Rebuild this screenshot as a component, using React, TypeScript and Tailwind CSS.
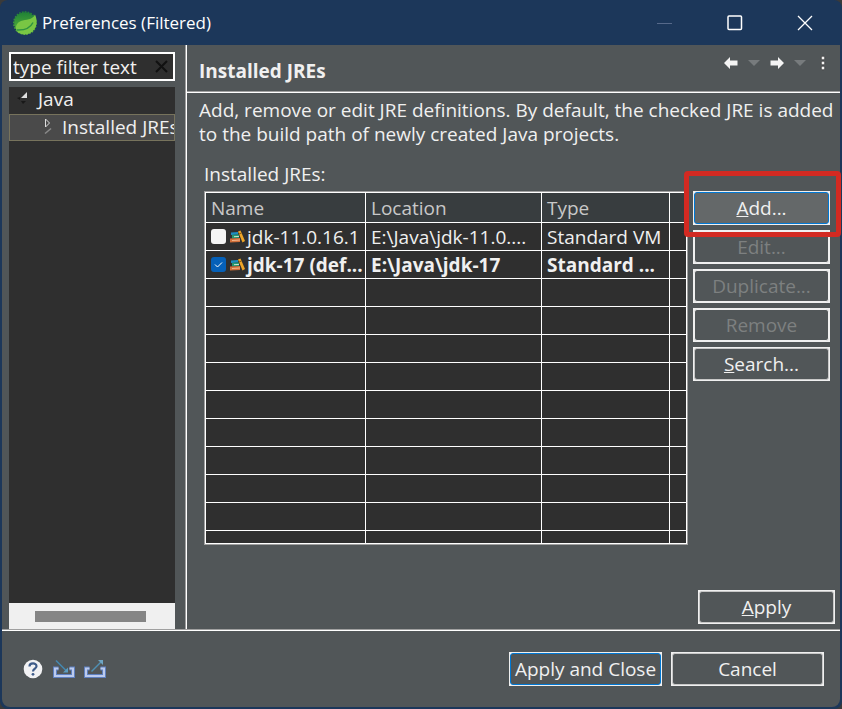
import type { ReactNode } from "react";

const emptyRows = Array.from({ length: 9 }, (_, i) => i);

const jres = [
  { name: "jdk-11.0.16.1", location: "E:\\Java\\jdk-11.0....", type: "Standard VM", isDefault: false },
  { name: "jdk-17 (def...", location: "E:\\Java\\jdk-17", type: "Standard ...", isDefault: true },
];

function SpringLogo() {
  return (
    <svg width="24" height="24" viewBox="0 0 24 24" aria-hidden="true">
      <defs>
        <linearGradient id="gear" x1="0" y1="0" x2="0" y2="1">
          <stop offset="0" stopColor="#1f8136" />
          <stop offset="1" stopColor="#5db83a" />
        </linearGradient>
      </defs>
      <circle cx="12" cy="12" r="10.800" fill="url(#gear)" />
      <circle cx="12" cy="12" r="11.200" fill="none" stroke="url(#gear)" strokeWidth="1.500" strokeDasharray="1.700 1.200" />
      <path d="M22 3.500C24.500 9 24.500 16 19.500 20.500C14 25 7 24 3.500 20C2 17 3 12 8 10C13 8 19 9.500 22 3.500Z" fill="#79c644" />
      <path d="M3.500 19C11 19.500 17 17.500 20 11.500" fill="none" stroke="#2f9440" strokeWidth="1.500" />
    </svg>
  );
}

function Books() {
  return (
    <svg width="15" height="14" viewBox="0 0 15 14" className="shrink-0" aria-hidden="true">
      <path d="M1 2.500L8 2V4.500L1 5Z" fill="#1e8fc0" />
      <path d="M2 5L9 4.500V8L2 8.500Z" fill="#27976f" />
      <path d="M4 6.700L9 6.400" stroke="#c7e6cf" />
      <path d="M0 8.500L10 8V12L0 12.500Z" fill="#d2703a" />
      <path d="M2 10.500L10 10" stroke="#f3b68c" />
      <path d="M8 1.500L10.500 .5L15 11L12.500 12.500Z" fill="#eda528" />
      <path d="M9 4L11.500 3" stroke="#8a5a10" />
    </svg>
  );
}

function Arrow({ flip }: { flip?: boolean }) {
  return (
    <svg width="14" height="12" viewBox="0 0 14 12" className={flip ? "-scale-x-100" : ""} aria-hidden="true">
      <path d="M0 6L6 0V3.500H13.500V8.500H6V12Z" fill="#f4f4f4" />
    </svg>
  );
}

function Caret() {
  return (
    <svg width="12" height="6" viewBox="0 0 12 6" aria-hidden="true">
      <path d="M0 0H12L6 6Z" fill="#777b7d" />
    </svg>
  );
}

function Tray({ out }: { out?: boolean }) {
  return (
    <svg width="22" height="20" viewBox="0 0 22 20" aria-hidden="true">
      <path d="M5.500 9.500H2V17H20V9.500H16.500" fill="none" stroke="#5f80c0" strokeWidth="4" />
      <path d="M5.500 9.500H2V17H20V9.500H16.500" fill="none" stroke="#bccbee" strokeWidth="2" />
      {out ? (
        <>
          <path d="M7.500 12.500L17 3" stroke="#4f8fb3" strokeWidth="1.500" />
          <path d="M14 1H19V6Z" fill="#6ea5c4" />
        </>
      ) : (
        <>
          <path d="M3 1.500L13 11.500" stroke="#4488b0" strokeWidth="1.500" />
          <path d="M15 8.500V13.500H10Z" fill="#5b9cc0" />
        </>
      )}
    </svg>
  );
}

type ButtonProps = { children: ReactNode; className?: string; disabled?: boolean; focus?: boolean; lit?: boolean };

function Button({ children, className = "", disabled, focus, lit }: ButtonProps) {
  const edge = focus ? "border-[#0078d4]" : disabled ? "border-[#f0f0f0]" : "border-[#c8c8c8]";
  return (
    <button
      type="button"
      disabled={disabled}
      className={`h-[34px] border border-[#f0f0f0] bg-[#f0f0f0] text-[19px] leading-6 ${disabled ? "text-[#7d8080]" : "text-[#f0f0f0]"} ${className}`}
    >
      <span className={`flex h-full w-full items-center justify-center whitespace-nowrap rounded-[3px] border ${edge} ${lit ? "bg-[#646869]" : "bg-[#515658]"}`}>
        <span>{children}</span>
      </span>
    </button>
  );
}

export default function App() {
  return (
    <div className="min-h-screen bg-[#3a3a3a] font-['Open_Sans','Noto_Sans',sans-serif] text-[19px] text-[#f0f0f0]">
      <div className="flex min-h-screen flex-col overflow-hidden rounded-lg bg-[#1c375a] px-[2px] pb-[2px]">
        <header className="flex h-[45px] shrink-0 items-center pl-[11px]">
          <SpringLogo />
          <h1 className="ml-[5px] flex-1 text-[17px] leading-6 text-white">Preferences (Filtered)</h1>
          <button type="button" aria-label="Minimize" disabled className="flex h-full w-[70px] items-center justify-center">
            <svg width="16" height="16" viewBox="0 0 16 16"><path d="M0 8.500H15" stroke="#56698a" /></svg>
          </button>
          <button type="button" aria-label="Maximize" className="flex h-full w-[70px] items-center justify-center">
            <svg width="16" height="16" viewBox="0 0 16 16"><rect x="1" y="1" width="13.500" height="13.500" rx="1" fill="none" stroke="#fff" strokeWidth="1.500" /></svg>
          </button>
          <button type="button" aria-label="Close" className="flex h-full w-[70px] items-center justify-center">
            <svg width="16" height="16" viewBox="0 0 16 16"><path d="M1 1L15 15M15 1L1 15" stroke="#fff" strokeWidth="1.300" /></svg>
          </button>
        </header>

        <div className="flex flex-1 flex-col rounded-b-lg bg-[#515658]">
          <div className="flex flex-1">
            <aside className="flex w-[183px] shrink-0 flex-col pl-[7px] pr-[10px] pt-[7px]">
              <div className="flex h-[29px] items-center border-2 border-white bg-[#2f2f2f]">
                <input
                  aria-label="Filter"
                  placeholder="type filter text"
                  className="min-w-0 flex-1 bg-transparent pl-[2px] leading-6 outline-none placeholder:text-[#f0f0f0]"
                />
                <button type="button" aria-label="Clear filter" className="px-[5px]">
                  <svg width="13" height="13" viewBox="0 0 13 13"><path d="M1 1L12 12M12 1L1 12" stroke="#111" strokeWidth="2" /></svg>
                </button>
              </div>
              <ul className="mt-[6px] flex-1 overflow-hidden bg-[#2f2f2f] leading-6">
                <li>
                  <div className="flex h-[27px] items-start gap-[10px] pl-[8px]">
                    <svg width="11" height="12" viewBox="0 0 11 12" className="mt-[5px]" aria-hidden="true">
                      <path d="M10 0V6H4Z" fill="#e0e0e0" />
                      <path d="M0 6L3 5V8Z M4 9H9L6 12Z" fill="#181818" />
                    </svg>
                    <span>Java</span>
                  </div>
                  <ul>
                    <li className="flex h-[27px] items-start gap-[9px] overflow-hidden border border-[#77735c] bg-[#4a4a4a] pl-[34px]">
                      <svg width="9" height="16" viewBox="0 0 9 16" className="mt-[3px] shrink-0" aria-hidden="true">
                        <path d="M1.500 1V9L5.500 5Z" fill="none" stroke="#ddd" />
                        <path d="M1 15.500L7 10.500" stroke="#8a8a8a" strokeWidth="1.500" />
                      </svg>
                      <span className="whitespace-nowrap">Installed JREs</span>
                    </li>
                  </ul>
                </li>
              </ul>
              <div className="flex h-[26px] items-center bg-[#f0f0f0] pl-[26px] pr-[29px]">
                <div className="h-[11px] w-full bg-[#858585]" />
              </div>
            </aside>

            <main className="flex min-w-0 flex-1 flex-col border-l border-[#a0a0a0]">
              <div className="flex flex-1 flex-col border-l border-white">
                <div className="flex h-[47px] shrink-0 items-center border-b border-[#a0a0a0] pl-[12px] pr-[14px]">
                  <h2 className="flex-1 pt-[5px] font-bold leading-6">Installed JREs</h2>
                  <div className="flex items-center pb-[10px]">
                    <button type="button" aria-label="Back"><Arrow /></button>
                    <button type="button" aria-label="Back history" className="ml-[10px]"><Caret /></button>
                    <button type="button" aria-label="Forward" className="ml-[10px]"><Arrow flip /></button>
                    <button type="button" aria-label="Forward history" className="ml-[10px]"><Caret /></button>
                    <button type="button" aria-label="View menu" className="ml-[14px]">
                      <svg width="6" height="16" viewBox="0 0 6 16"><g fill="#f4f4f4" stroke="#333" strokeWidth="0.700"><circle cx="3" cy="3" r="1.900" /><circle cx="3" cy="8" r="1.900" /><circle cx="3" cy="13" r="1.900" /></g></svg>
                    </button>
                  </div>
                </div>
                <div className="flex flex-1 flex-col border-t border-white">
                  <p className="pl-[12px] pt-[5px] leading-6">
                    Add, remove or edit JRE definitions. By default, the checked JRE is added to the build path of newly created Java projects.
                  </p>
                  <h3 className="mt-[16px] pl-[17px] leading-6">Installed JREs:</h3>
                  <div className="mt-[5px] flex items-start gap-[5px] pl-[17px] pr-[10px]">
                    <div className="min-w-0 flex-1 border border-[#a0a0a0]">
                      <table className="w-full table-fixed border-separate border-spacing-0 border border-white bg-[#2f2f2f] leading-6 [&_td]:border-b [&_td]:border-r [&_td]:border-white [&_td]:px-[5px] [&_td]:py-0 [&_td]:whitespace-nowrap [&_td:last-child]:border-r-0 [&_th]:border-b [&_th]:border-r [&_th]:border-white [&_th]:px-[5px] [&_th]:text-left [&_th]:font-normal [&_th]:text-[#c8c8c8] [&_th:last-child]:border-r-0">
                        <colgroup>
                          <col className="w-[160px]" />
                          <col className="w-[176px]" />
                          <col className="w-[128px]" />
                          <col />
                        </colgroup>
                        <thead className="bg-[#383d3f]">
                          <tr className="h-[30px]">
                            <th scope="col">Name</th>
                            <th scope="col">Location</th>
                            <th scope="col">Type</th>
                            <th />
                          </tr>
                        </thead>
                        <tbody>
                          {jres.map((jre) => (
                            <tr key={jre.name} className={`h-[28px] ${jre.isDefault ? "font-bold" : ""}`}>
                              <td>
                                <label className="flex items-center">
                                  <span className="relative flex shrink-0">
                                    <input
                                      type="checkbox"
                                      defaultChecked={jre.isDefault}
                                      className="peer h-[15px] w-[15px] appearance-none rounded-[3px] bg-[#f4f4f4] checked:bg-[#0560b8]"
                                    />
                                    <svg width="15" height="15" viewBox="0 0 15 15" className="pointer-events-none absolute inset-0 hidden peer-checked:block">
                                      <path d="M4 7.500L6.500 10L11 5.500" fill="none" stroke="#fff" />
                                    </svg>
                                  </span>
                                  <span className="ml-[4px] flex shrink-0"><Books /></span>
                                  <span className="ml-[2px]">{jre.name}</span>
                                </label>
                              </td>
                              <td>{jre.location}</td>
                              <td>{jre.type}</td>
                              <td />
                            </tr>
                          ))}
                          {emptyRows.map((i) => (
                            <tr key={i} className="h-[28px]"><td /><td /><td /><td /></tr>
                          ))}
                          <tr className="h-[12px] [&>td]:border-b-0"><td /><td /><td /><td /></tr>
                        </tbody>
                      </table>
                    </div>
                    <div className="relative flex w-[137px] shrink-0 flex-col gap-[5px]">
                      <Button focus lit><u>A</u>dd...</Button>
                      <Button disabled>Edit...</Button>
                      <Button disabled>Duplicate...</Button>
                      <Button disabled>Remove</Button>
                      <Button><u>S</u>earch...</Button>
                      <div className="pointer-events-none absolute -left-[9px] -right-[11px] -top-[20px] h-[66px] rounded-sm border-5 border-[#d32a22]" />
                    </div>
                  </div>
                  <div className="mt-auto flex justify-end pb-[5px] pr-[5px]">
                    <Button className="w-[137px]"><u>A</u>pply</Button>
                  </div>
                </div>
              </div>
            </main>
          </div>

          <footer className="border-t border-[#a0a0a0]">
            <div className="flex h-[77px] items-center border-t border-white pl-[21px] pr-[16px]">
              <button type="button" aria-label="Help">
                <svg width="20" height="20" viewBox="0 0 20 20">
                  <circle cx="10" cy="10" r="9.300" fill="#f2f2f4" />
                  <path d="M6.500 7.500C6.500 3.500 13.500 3.500 13.500 7.200C13.500 9.500 10 9.700 10 12.500" fill="none" stroke="#3f5c8a" strokeWidth="2.200" />
                  <circle cx="10" cy="15.300" r="1.400" fill="#3f5c8a" />
                </svg>
              </button>
              <button type="button" aria-label="Import" className="ml-[10px]"><Tray /></button>
              <button type="button" aria-label="Export" className="ml-[9px]"><Tray out /></button>
              <div className="ml-auto flex gap-[9px]">
                <Button focus className="w-[153px]">Apply and Close</Button>
                <Button className="w-[153px]">Cancel</Button>
              </div>
            </div>
          </footer>
        </div>
      </div>
    </div>
  );
}
